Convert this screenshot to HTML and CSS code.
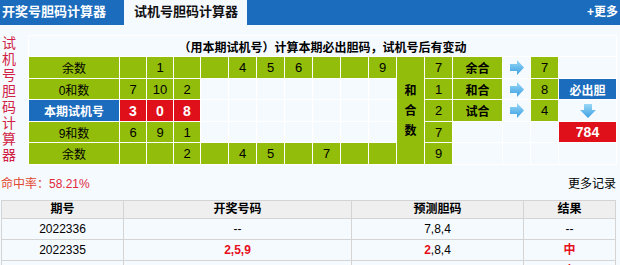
FILE: index.html
```html
<html>
<head>
    <meta charset="utf-8">
    <link rel="stylesheet" href="styles.css">
</head>
<body>

<div class="topbar">
    <a class="tab">开奖号胆码计算器</a>
    <a class="tab active">试机号胆码计算器</a>
    <a class="more">+更多</a>
</div>

<div class="calc">
    <div class="side">试机号胆码计算器</div>
    <div class="grid">
        <div class="title">（用本期试机号）计算本期必出胆码，试机号后有变动</div>

        <!-- row 1 -->
        <div class="g name">余数</div>
        <div class="g"></div><div class="g">1</div><div class="g"></div><div class="g"></div><div class="g">4</div>
        <div class="g">5</div><div class="g">6</div><div class="g"></div><div class="g"></div><div class="g">9</div>
        <div class="g hhs">和<br>合<br>数</div>
        <div class="g">7</div>
        <div class="g name strong">余合</div>
        <div class="c"><svg width="14" height="15" viewBox="0 0 14 15"><path d="M0 4H7V0L14 7.5L7 15V11H0Z" fill="url(#ar)"/></svg></div>
        <div class="g">7</div>
        <div class="c"></div>

        <!-- row 2 -->
        <div class="g name">0和数</div>
        <div class="g">7</div><div class="g">10</div><div class="g">2</div>
        <div class="c"></div><div class="c"></div><div class="c"></div><div class="c"></div><div class="c"></div><div class="c"></div><div class="c"></div>
        <div class="g">1</div>
        <div class="g name strong">和合</div>
        <div class="c"><svg width="14" height="15" viewBox="0 0 14 15"><path d="M0 4H7V0L14 7.5L7 15V11H0Z" fill="url(#ar)"/></svg></div>
        <div class="g">8</div>
        <div class="b name strong">必出胆</div>

        <!-- row 3 -->
        <div class="b name strong">本期试机号</div>
        <div class="r">3</div><div class="r">0</div><div class="r">8</div>
        <div class="c"></div><div class="c"></div><div class="c"></div><div class="c"></div><div class="c"></div><div class="c"></div><div class="c"></div>
        <div class="g">2</div>
        <div class="g name strong">试合</div>
        <div class="c"><svg width="14" height="15" viewBox="0 0 14 15"><path d="M0 4H7V0L14 7.5L7 15V11H0Z" fill="url(#ar)"/></svg></div>
        <div class="g">4</div>
        <div class="c"><svg width="16" height="14" viewBox="0 0 16 14"><path d="M4 0H12V6H16L8 14L0 6H4Z" fill="url(#ar)"/></svg></div>

        <!-- row 4 -->
        <div class="g name">9和数</div>
        <div class="g">6</div><div class="g">9</div><div class="g">1</div>
        <div class="c"></div><div class="c"></div><div class="c"></div><div class="c"></div><div class="c"></div><div class="c"></div><div class="c"></div>
        <div class="g">7</div>
        <div class="c"></div><div class="c"></div><div class="c"></div>
        <div class="r">784</div>

        <!-- row 5 -->
        <div class="g name">余数</div>
        <div class="g"></div><div class="g"></div><div class="g">2</div><div class="g"></div><div class="g">4</div>
        <div class="g">5</div><div class="g"></div><div class="g">7</div><div class="g"></div><div class="g"></div>
        <div class="g">9</div>
        <div class="c"></div><div class="c"></div><div class="c"></div><div class="c"></div>
    </div>
</div>

<svg width="0" height="0" class="defs">
    <linearGradient id="ar" x1="0" y1="0" x2="0" y2="1">
        <stop offset="0" stop-color="#9ad8f6"/>
        <stop offset="1" stop-color="#3a9fe2"/>
    </linearGradient>
</svg>

<div class="info">
    <span class="rate">命中率：<em>58.21%</em></span>
    <a class="records">更多记录</a>
</div>

<table class="log">
    <tr><th class="w1">期号</th><th class="w2">开奖号码</th><th class="w3">预测胆码</th><th>结果</th></tr>
    <tr><td>2022336</td><td>--</td><td>7,8,4</td><td>--</td></tr>
    <tr><td>2022335</td><td class="hit">2,5,9</td><td><b class="hit">2</b>,8,4</td><td class="hit">中</td></tr>
    <tr><td>2022334</td><td class="hit">4,1,6</td><td>3,<b class="hit">4</b>,9</td><td class="hit">中</td></tr>
</table>

</body>
</html>
```

FILE: styles.css
```css
body { margin: 0; background: #f5faff; font-family: "Liberation Sans", "Noto Sans CJK SC", sans-serif; font-size: 12px; color: #000; }
a { color: inherit; text-decoration: none; }

.topbar { display: flex; height: 25px; background: #1b6cbd; color: #fff; font-size: 13px; font-weight: bold; line-height: 24px; }
.tab { padding: 0 10px 0 2px; }
.tab.active { background: #f5faff; color: #111; padding: 0 9px 0 10px; margin-left: 8px; }
.more { margin-left: auto; font-size: 12px; padding-right: 2px; }

.calc { display: flex; margin-top: 10px; }
.side { width: 14px; padding-left: 2px; margin-right: 12px; font-size: 14px; line-height: 16px; color: #d11f45; }
.grid {
    display: grid;
    grid-template-columns: 90px 26px 26px 26px repeat(7, 27px) 27px 27px 49px 27px 27px 57px;
    grid-template-rows: 20px 21px 20px 21px 20px 21px;
    gap: 1px;
    padding: 1px;
    background: #fff;
}
.grid > div { display: flex; align-items: center; justify-content: center; font-size: 13px; }
.title { grid-column: 1 / -1; background: #f5faff; font-weight: bold; font-size: 12px !important; }
.g { background: #93bd0b; }
.c { background: #f5faff; }
.b { background: #1b6cbd; color: #fff; }
.r { background: #e0101a; color: #fff; font-weight: bold; font-size: 14px !important; }
.name { font-size: 12px !important; }
.strong { font-weight: bold; }
.hhs { grid-row: span 5; font-weight: bold; font-size: 12px !important; line-height: 20px; text-align: center; }
.defs { position: absolute; }

.info { display: flex; justify-content: space-between; align-items: center; height: 35px; padding: 0 4px 0 1px; }
.rate { color: #e2472f; }
.rate em { font-style: normal; color: #e02a3c; }

.log { border-collapse: collapse; table-layout: fixed; width: 615px; margin-left: 1px; text-align: center; font-size: 12px; }
.log th, .log td { border: 1px solid #d4d4d4; padding: 0; font-size: 12px; }
.log th { background: #efefef; height: 17px; line-height: 17px; }
.log td { height: 20px; line-height: 20px; }
.w1 { width: 121px; }
.w2 { width: 227px; }
.w3 { width: 171px; }
.hit { color: #e60f1a; font-weight: bold; }
```
